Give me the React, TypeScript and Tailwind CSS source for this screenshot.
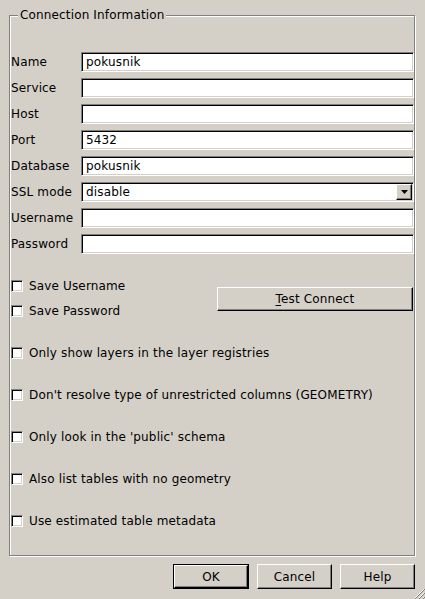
import React from "react";

const sunken =
  "border border-t-[#808080] border-l-[#808080] border-b-white border-r-white shadow-[inset_1px_1px_0_#000,inset_-1px_-1px_0_#d4d0c8]";
const raised =
  "border border-t-white border-l-white border-b-black border-r-black shadow-[inset_-1px_-1px_0_#808080]";

function Field({ label, value }: { label: string; value?: string }) {
  return (
    <div className="flex items-center h-[20px]">
      <div className="w-[70px] shrink-0">{label}</div>
      <div className={`flex-1 h-[20px] bg-white pl-[4px] flex items-center ${sunken}`}>{value}</div>
    </div>
  );
}

function Combo({ label, value }: { label: string; value: string }) {
  return (
    <div className="flex items-center h-[20px]">
      <div className="w-[70px] shrink-0">{label}</div>
      <div className={`flex-1 h-[20px] bg-white pl-[4px] flex items-center ${sunken}`}>
        <span className="flex-1">{value}</span>
        <div className={`w-[16px] h-[16px] mr-[1px] bg-[#d4d0c8] flex items-center justify-center ${raised}`}>
          <svg width="7" height="4" viewBox="0 0 7 4">
            <polygon points="0,0 7,0 3.5,4" fill="#000" />
          </svg>
        </div>
      </div>
    </div>
  );
}

function Check({ label }: { label: string }) {
  return (
    <div className="flex items-center h-[12px] gap-[6px]">
      <div className={`w-[12px] h-[12px] shrink-0 bg-white ${sunken}`} />
      <span>{label}</span>
    </div>
  );
}

function Button({ children, isDefault }: { children: React.ReactNode; isDefault?: boolean }) {
  const inner = (
    <div className={`flex-1 h-full flex items-center justify-center bg-[#d4d0c8] ${raised}`}>{children}</div>
  );
  return (
    <div className={`w-[75px] h-[25px] flex ${isDefault ? "border border-black w-[76px]" : ""}`}>{inner}</div>
  );
}

export default function App() {
  return (
    <div className="w-[425px] h-[599px] bg-[#d4d0c8] text-black text-[12px] tracking-[0.15px] font-['DejaVu_Sans',sans-serif] flex flex-col pt-[15px] pl-[9px] pr-[10px] relative overflow-hidden">
      <div className="relative w-[406px] h-[541px] border border-[#808080] shadow-[1px_1px_0_#fff,inset_1px_1px_0_#fff] flex flex-col pl-[1px] pt-[36px]">
        <span className="absolute left-[8px] top-[-9px] px-[2px] bg-[#d4d0c8] leading-[16px]">Connection Information</span>

        <div className="flex flex-col gap-[6px]">
          <Field label="Name" value="pokusnik" />
          <Field label="Service" />
          <Field label="Host" />
          <Field label="Port" value="5432" />
          <Field label="Database" value="pokusnik" />
          <Combo label="SSL mode" value="disable" />
          <Field label="Username" />
          <Field label="Password" />
        </div>

        <div className="flex items-center mt-[26px]">
          <div className="flex flex-col gap-[13px] w-[206px]">
            <Check label="Save Username" />
            <Check label="Save Password" />
          </div>
          <div className={`w-[196px] h-[24px] flex items-center justify-center ${raised}`}>
            <span>
              <span className="underline underline-offset-2">T</span>est Connect
            </span>
          </div>
        </div>

        <div className="flex flex-col gap-[30px] mt-[30px]">
          <Check label="Only show layers in the layer registries" />
          <Check label="Don't resolve type of unrestricted columns (GEOMETRY)" />
          <Check label="Only look in the 'public' schema" />
          <Check label="Also list tables with no geometry" />
          <Check label="Use estimated table metadata" />
        </div>
      </div>

      <div className="flex justify-end gap-[8px] mt-[8px]">
        <Button isDefault>OK</Button>
        <Button>Cancel</Button>
        <Button>Help</Button>
      </div>

      <svg className="absolute right-0 bottom-0" width="11" height="11" viewBox="0 0 11 11">
        <line x1="10" y1="1" x2="1" y2="10" stroke="#fff" />
        <line x1="11" y1="1" x2="1" y2="11" stroke="#808080" />
        <line x1="10" y1="5" x2="5" y2="10" stroke="#fff" />
        <line x1="11" y1="5" x2="5" y2="11" stroke="#808080" />
        <line x1="10" y1="9" x2="9" y2="10" stroke="#fff" />
        <line x1="11" y1="9" x2="9" y2="11" stroke="#808080" />
      </svg>
    </div>
  );
}
